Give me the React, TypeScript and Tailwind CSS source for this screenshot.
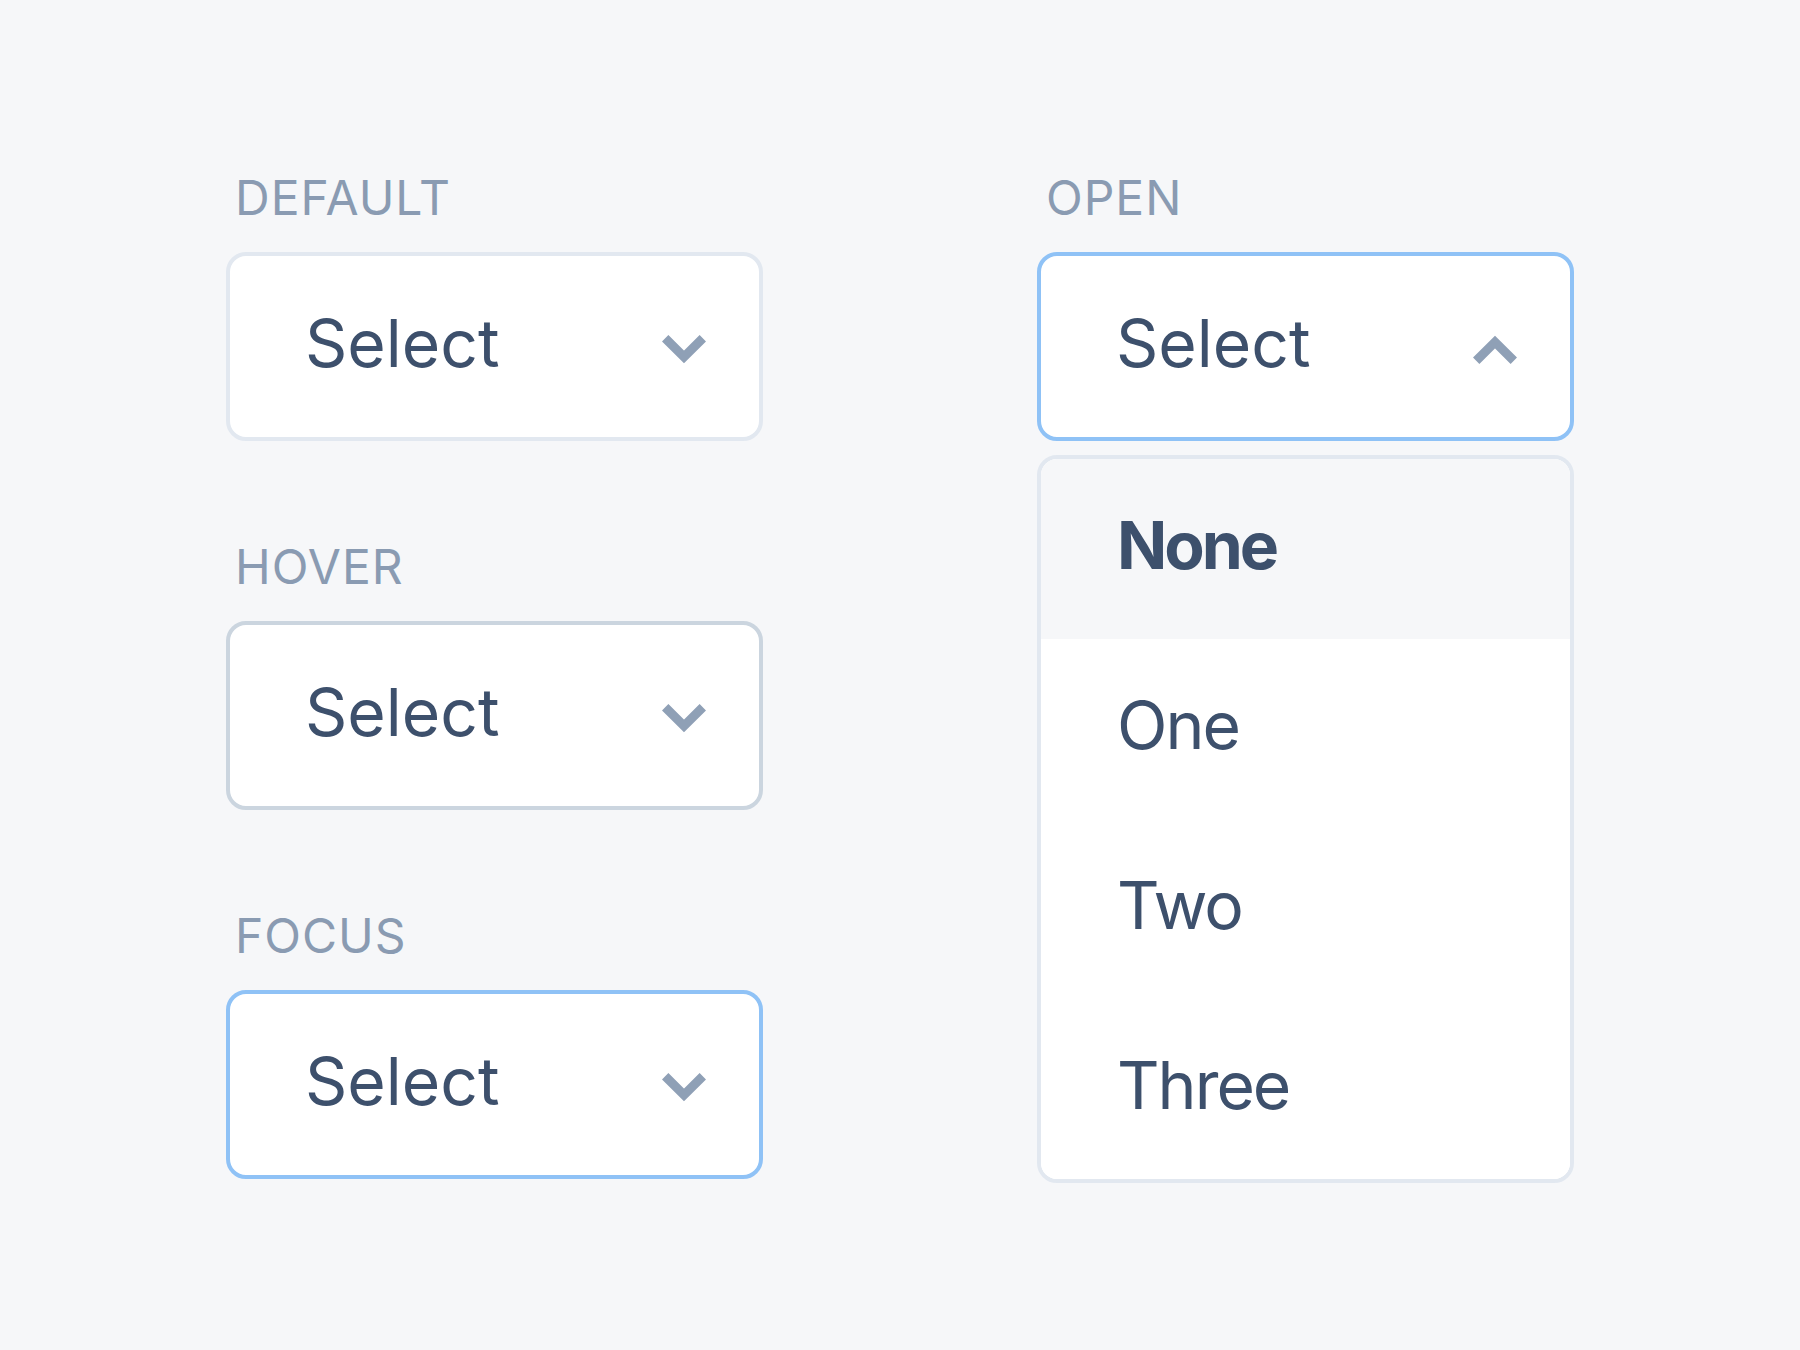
import React from "react";

const font = { fontFamily: "Inter, 'Open Sans', sans-serif" };

const Chevron = ({ up = false }: { up?: boolean }) => (
  <svg width="44" height="29" viewBox="0 0 44 29" fill="none" className="mt-[6px]">
    <polyline
      points={up ? "3.2,25.8 22,7 40.8,25.8" : "3.2,3.2 22,22 40.8,3.2"}
      stroke="#8fa0b6"
      strokeWidth="9"
      strokeLinecap="butt"
      strokeLinejoin="miter"
    />
  </svg>
);

const SelectBox = ({ border, up }: { border: string; up?: boolean }) => (
  <div
    className={`flex items-center justify-between h-[189px] w-[537px] rounded-[20px] border-4 bg-white pl-[75px] pr-[53px] ${border}`}
  >
    <span className="text-[66px] leading-none text-[#3d506c] mb-[8px]">Select</span>
    <Chevron up={up} />
  </div>
);

const Label = ({ children }: { children: React.ReactNode }) => (
  <div className="text-[48px] leading-none tracking-[1px] text-[#8a9bb2] pl-[9px] mb-[30px]">{children}</div>
);

const OPTIONS = ["None", "One", "Two", "Three"];

export default function App() {
  return (
    <div className="min-h-screen w-full bg-[#f6f7f9] flex justify-center gap-[274px] pt-[174px]" style={font}>
      {/* left column */}
      <div className="flex flex-col gap-[102px]">
        <div>
          <Label>DEFAULT</Label>
          <SelectBox border="border-[#e2e8f0]" />
        </div>
        <div>
          <Label>HOVER</Label>
          <SelectBox border="border-[#cbd5df]" />
        </div>
        <div>
          <Label>FOCUS</Label>
          <SelectBox border="border-[#8fc2f6]" />
        </div>
      </div>
      {/* right column */}
      <div className="flex flex-col">
        <Label>OPEN</Label>
        <SelectBox border="border-[#8fc2f6]" up />
        <div className="mt-[14px] w-[537px] rounded-[20px] border-4 border-[#e2e8f0] bg-white overflow-hidden">
          {OPTIONS.map((opt, i) => (
            <div
              key={opt}
              className={`flex items-center h-[180px] pl-[76px] ${i === 0 ? "bg-[#f6f7f9]" : "bg-white"}`}
            >
              <span
                className={`text-[66px] leading-none text-[#3d506c] mb-[8px] ${
                  i === 0 ? "font-bold tracking-[-3px]" : "tracking-[-2px]"
                }`}
              >
                {opt}
              </span>
            </div>
          ))}
        </div>
      </div>
    </div>
  );
}
